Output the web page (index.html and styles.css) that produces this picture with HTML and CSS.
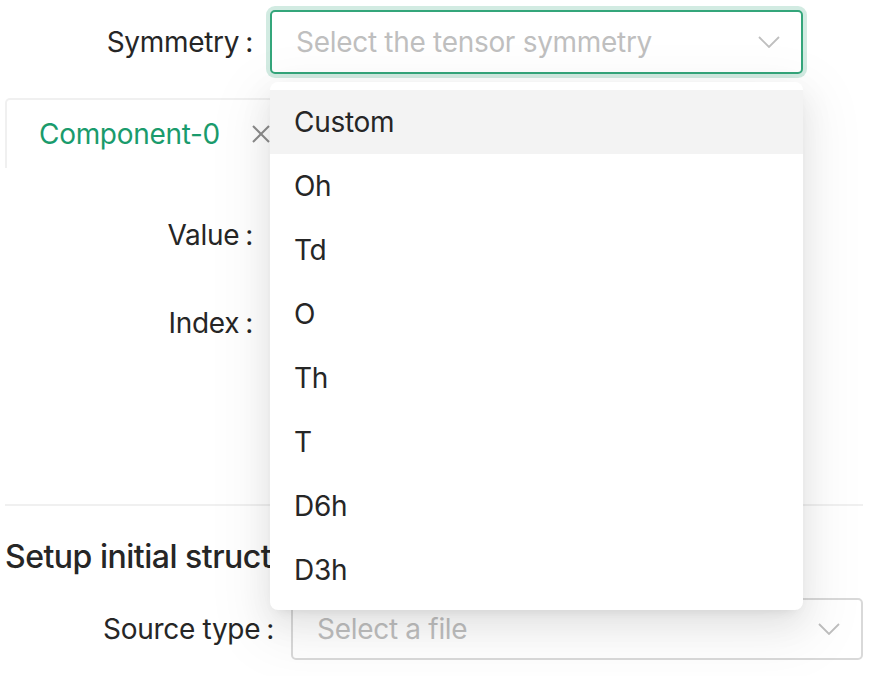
FILE: index.html
```html
<!DOCTYPE html>
<html lang="en">
<head>
<meta charset="utf-8">
<title>Tensor form</title>
<link rel="stylesheet" href="styles.css">
</head>
<body>
<div class="page">
  <div class="form-item sym">
    <div class="label">Symmetry</div>
    <div class="select focused">
      <span class="placeholder">Select the tensor symmetry</span>
      <svg class="arrow" width="22" height="12" viewBox="0 0 22 12"><polyline points="1,1 11,11 21,1" fill="none" stroke="#bfbfbf" stroke-width="1.8"/></svg>
    </div>
  </div>

  <div class="tabs">
    <div class="tab-nav">
      <div class="tab active">
        <span class="tab-title">Component-0</span>
        <svg class="tab-close" width="18" height="18" viewBox="0 0 18 18"><path d="M1 1L17 17M17 1L1 17" stroke="#8c8c8c" stroke-width="2" fill="none"/></svg>
      </div>
    </div>
    <div class="tab-pane">
      <div class="form-item row">
        <div class="label">Value</div>
        <div class="control"></div>
      </div>
      <div class="form-item row">
        <div class="label">Index</div>
        <div class="control"></div>
      </div>
    </div>
  </div>

  <div class="divider"></div>

  <h4 class="heading">Setup initial structure</h4>

  <div class="form-item src">
    <div class="label wide">Source type</div>
    <div class="select">
      <span class="placeholder">Select a file</span>
      <svg class="arrow" width="22" height="12" viewBox="0 0 22 12"><polyline points="1,1 11,11 21,1" fill="none" stroke="#bfbfbf" stroke-width="1.8"/></svg>
    </div>
  </div>

  <div class="dropdown">
    <div class="option active">Custom</div>
    <div class="option">Oh</div>
    <div class="option">Td</div>
    <div class="option">O</div>
    <div class="option">Th</div>
    <div class="option">T</div>
    <div class="option">D6h</div>
    <div class="option">D3h</div>
  </div>
</div>
</body>
</html>
```

FILE: styles.css
```css
* { box-sizing: border-box; }

html, body {
  margin: 0;
  padding: 0;
  background: #ffffff;
}

body {
  font-family: Inter, "Liberation Sans", Arial, sans-serif;
  font-size: 28px;
  letter-spacing: -0.3px;
  color: #262626;
  overflow: hidden;
}

.page {
  position: relative;
  width: 876px;
  height: 676px;
  padding: 10px 13px 0 5px;
}

.form-item {
  display: flex;
  align-items: center;
  height: 64px;
}

.label {
  flex: none;
  width: 265px;
  display: flex;
  justify-content: flex-end;
  align-items: center;
  white-space: nowrap;
  font-size: 28px;
  line-height: 44px;
  color: #262626;
}

.label::after {
  content: ":";
  margin: 0 17px 0 6px;
}

.label.wide { width: 286px; }

.select {
  display: flex;
  align-items: center;
  justify-content: space-between;
  height: 64px;
  padding: 0 21px 0 24px;
  border: 2px solid #d9d9d9;
  border-radius: 5px;
  background: #fff;
}

.sym .select { width: 533px; }
.src .select { width: 572px; height: 62px; }

.select.focused {
  border-color: #34a67b;
  box-shadow: 0 0 0 4px rgba(52, 166, 123, 0.22);
}

.placeholder {
  color: #bfbfbf;
  font-size: 28px;
  line-height: 44px;
  white-space: nowrap;
}

.arrow { flex: none; }

.tabs { margin-top: 24px; }

.tab-nav { display: flex; }

.tab {
  display: flex;
  align-items: center;
  gap: 32px;
  height: 70px;
  padding: 0 32px;
  border: 2px solid #f0f0f0;
  border-bottom: none;
  border-radius: 5px 5px 0 0;
  background: #fff;
}

.tab-title {
  color: #1a9b6c;
  font-size: 28px;
  line-height: 44px;
  white-space: nowrap;
}

.tab-close { flex: none; }

.tab-pane { padding-top: 35px; }

.row { margin-bottom: 24px; }

.control { flex: 1; height: 64px; }

.divider {
  margin-top: 149px;
  height: 2px;
  background: #f0f0f0;
}

.heading {
  margin: 29px 0 18px 0;
  font-size: 32px;
  line-height: 44px;
  font-weight: 500;
  letter-spacing: -0.5px;
  color: #262626;
  white-space: nowrap;
}

.dropdown {
  position: absolute;
  top: 82px;
  left: 270px;
  width: 533px;
  padding: 8px 0;
  background: #fff;
  border-radius: 8px;
  box-shadow: 0 6px 12px -8px rgba(0,0,0,0.12), 0 12px 32px 0 rgba(0,0,0,0.08), 0 18px 56px 16px rgba(0,0,0,0.05);
}

.option {
  height: 64px;
  padding: 10px 24px;
  font-size: 28px;
  line-height: 44px;
  color: #262626;
}

.option.active { background: #f3f3f3; }
```
